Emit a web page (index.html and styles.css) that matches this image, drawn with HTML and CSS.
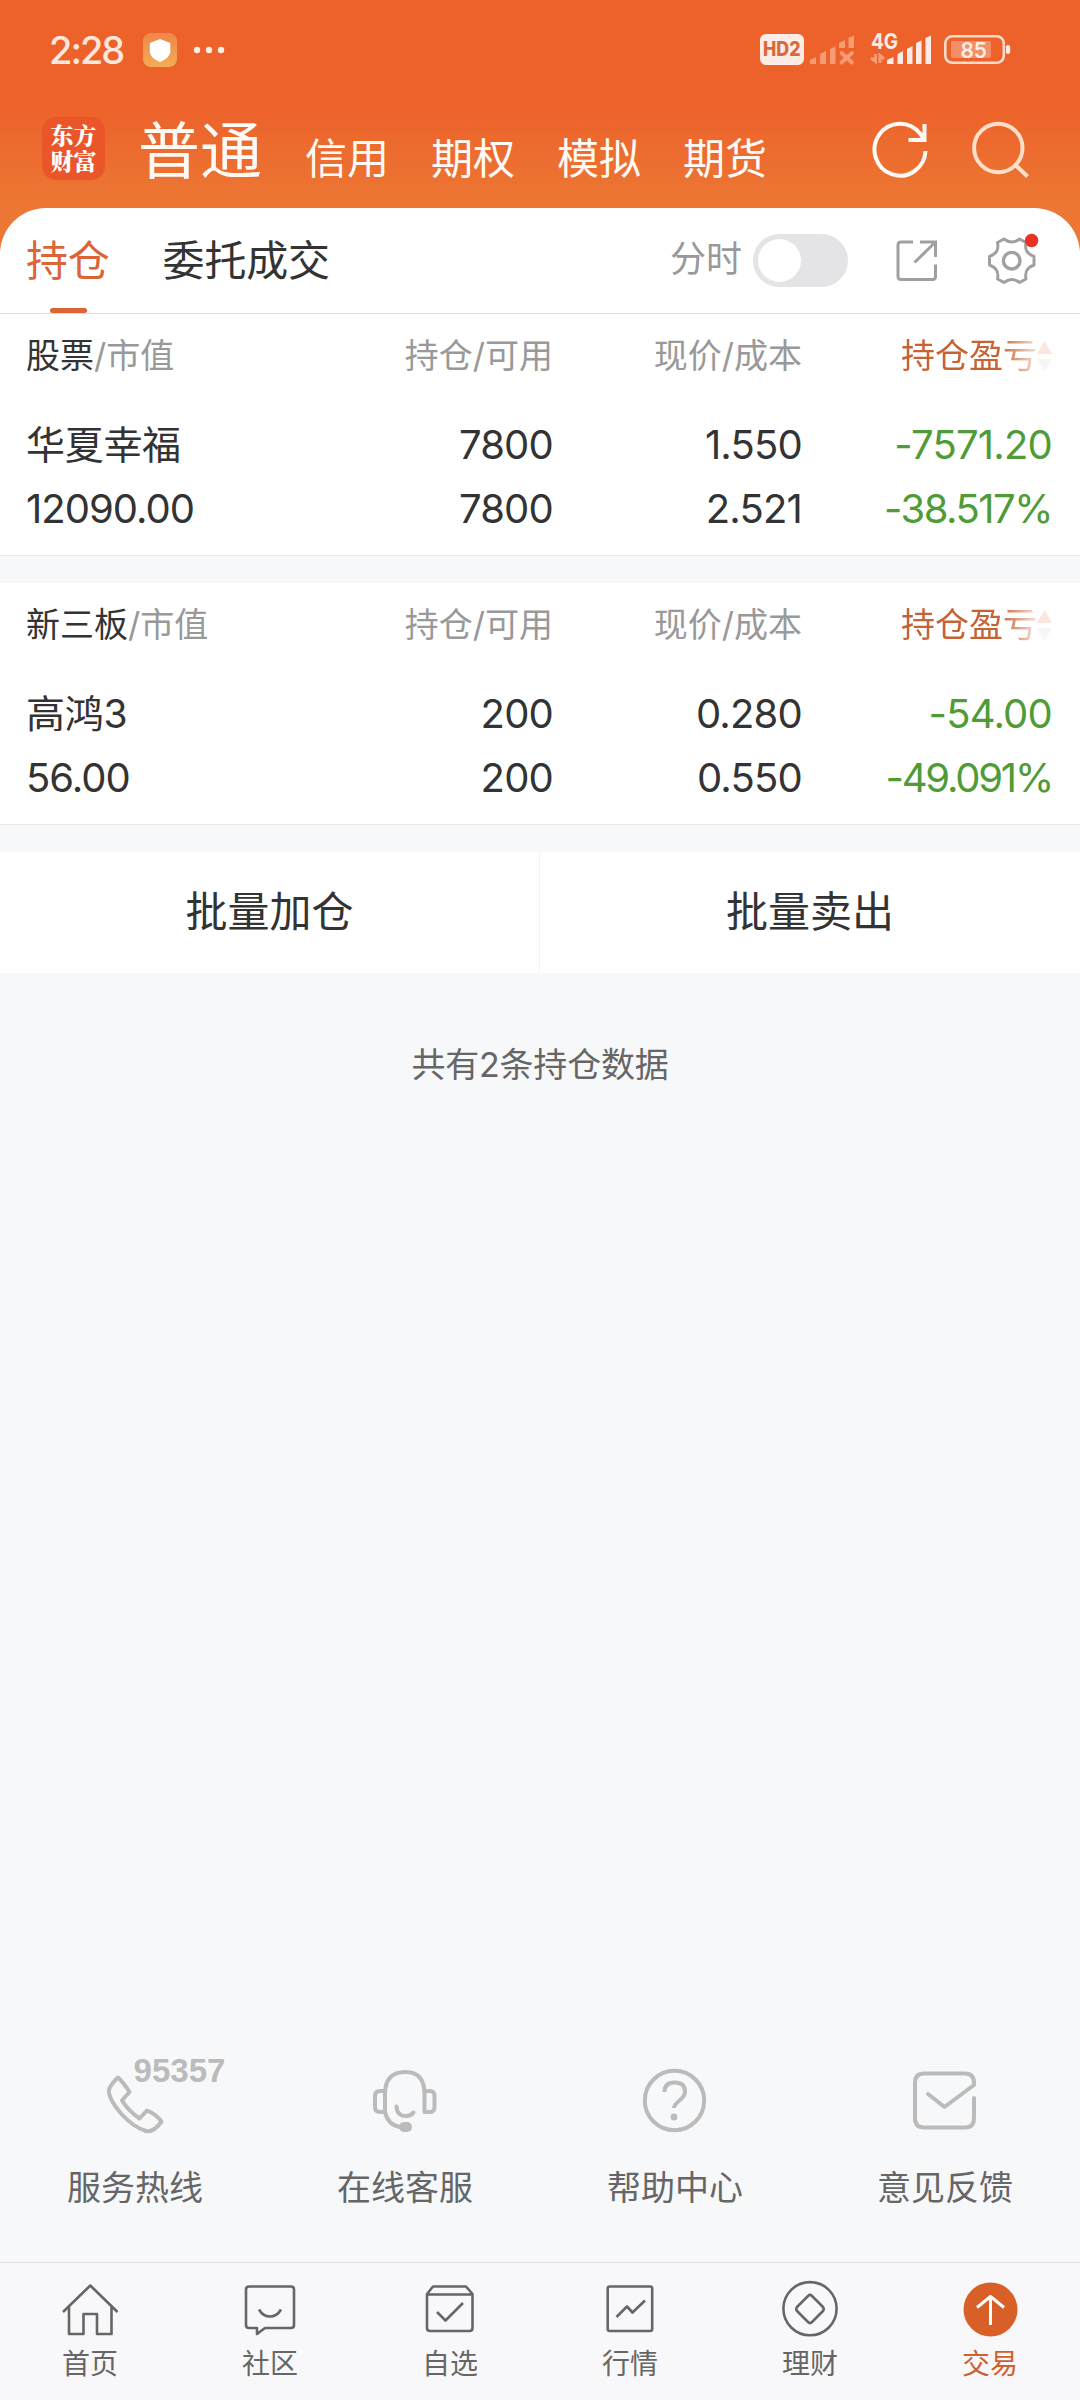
FILE: index.html
```html
<!DOCTYPE html>
<html lang="zh-CN">
<head>
<meta charset="utf-8">
<title>交易</title>
<link rel="stylesheet" href="styles.css">
</head>
<body>
<div class="app">
  <header class="top">
    <div class="status">
      <span class="time">2:28</span>
      <svg class="shield" width="34" height="34" viewBox="0 0 34 34"><defs><linearGradient id="sg" x1="0" y1="0" x2="0" y2="1"><stop offset="0" stop-color="#f08548"/><stop offset="1" stop-color="#f3ac55"/></linearGradient></defs><rect width="34" height="34" rx="8" fill="url(#sg)"/><path d="M17 6L27.300 10V19.500Q26 25.500 17 29Q8 25.500 6.800 19.500V10Z" fill="#fff"/></svg>
      <svg class="dots" width="32" height="8" viewBox="193 46 32 8" fill="#fdeee6"><circle cx="197" cy="50" r="3.200"/><circle cx="209" cy="50" r="3.200"/><circle cx="221" cy="50" r="3.200"/></svg>
      <svg class="signals" width="260" height="52" viewBox="755 24 260 52">
        <rect x="760" y="34" width="44" height="31" rx="6" fill="#fdece5"/>
        <text x="763" y="56" textLength="37.500" lengthAdjust="spacingAndGlyphs" class="hd">HD2</text>
        <g fill="#f69b74"><path d="M810 60L816 57V64H810ZM820 54L826 51V64H820ZM830 49L835.500 46.500V64H830ZM839 43L845 40V48H839ZM848.500 38L854 35.500V48H848.500Z"/></g>
        <path d="M841.500 53L852 62.500M852 53L841.500 62.500" stroke="#f69b74" stroke-width="3.800" stroke-linecap="round"/>
        <text x="871" y="49" textLength="27" lengthAdjust="spacingAndGlyphs" class="g4">4G</text>
        <path d="M875.500 54V61.500L871 58M880 63V55.500L884 59" fill="none" stroke="#f69b74" stroke-width="3"/>
        <path d="M887 60L893.500 57V64H887ZM897.500 54L903 51V64H897.500ZM907 49L912.500 46V64H907ZM916 43L921.500 40.500V64H916ZM925.500 38L931 35.500V64H925.500Z" fill="#fdece5"/>
        <rect x="945.300" y="36.300" width="58.500" height="26.500" rx="7" fill="none" stroke="#fdd9c9" stroke-width="2.600"/>
        <rect x="951" y="41" width="40" height="17" rx="2" fill="#f38f66"/>
        <rect x="1006" y="45" width="4.200" height="9" rx="2" fill="#fdece5"/>
        <text x="960.500" y="57.500" textLength="26.500" lengthAdjust="spacingAndGlyphs" class="bat">85</text>
      </svg>
    </div>
    <nav class="markets">
      <div class="logo">东方<br>财富</div>
      <span class="market current">普通</span>
      <span class="market">信用</span>
      <span class="market">期权</span>
      <span class="market">模拟</span>
      <span class="market">期货</span>
      <svg class="refresh" width="58" height="60" viewBox="871 120 58 60" fill="none" stroke="#fffaf5" stroke-width="4"><path d="M925.500 151A25.500 26 0 1 1 920 133.500L924 139.500M924.500 124V140H908.500"/></svg>
      <svg class="search" width="58" height="60" viewBox="972 119 58 60" fill="none" stroke="#ffdfca" stroke-width="4"><circle cx="998.300" cy="147" r="24.200"/><path d="M1015.500 164L1027.500 175.500"/></svg>
    </nav>
  </header>

  <main class="sheet">
    <div class="tabs">
      <span class="tab active">持仓</span>
      <span class="tab">委托成交</span>
      <span class="switch-label">分时</span>
      <span class="switch"></span>
      <svg class="share" width="44" height="44" viewBox="895 239 44 44" fill="none" stroke="#a0a0a0" stroke-width="3"><path d="M913 242H901Q898 242 898 245V276.500Q898 279.500 901 279.500H932.500Q935.500 279.500 935.500 276.500V264.500M920 242H935.500V257M935.500 242L914.500 262.500"/></svg>
      <svg class="gear" width="56" height="56" viewBox="984 233 56 56" fill="none" stroke="#a0a0a0" stroke-width="3"><path d="M1004 239Q1011.700 245 1019.500 239L1026 242.500C1024.500 250 1027 254 1034 256.500V265C1027 267.500 1024.500 271.500 1026 279L1019.500 282.500Q1011.700 276.500 1004 282.500L997.500 279C999 271.500 996.500 267.500 989.500 265V256.500C996.500 254 999 250 997.500 242.500Z" stroke-linejoin="round"/><circle cx="1011.700" cy="260.700" r="8.300" stroke-width="3.400"/><circle cx="1031.600" cy="240.500" r="6.700" fill="#e93223" stroke="none"/></svg>
    </div>

    <section class="card">
      <div class="row head">
        <span><b>股票</b>/市值</span><span>持仓/可用</span><span>现价/成本</span>
        <span class="sort"><em>持仓盈亏</em><svg width="15" height="33" viewBox="0 0 15 33"><path d="M7.500 1L15 14H0Z" fill="#f9e7de"/><path d="M0 19H15L7.500 32Z" fill="#f6f6f6"/></svg></span>
      </div>
      <div class="row first"><span class="name">华夏幸福</span><span>7800</span><span>1.550</span><span class="loss">-7571.20</span></div>
      <div class="row"><span>12090.00</span><span>7800</span><span>2.521</span><span class="loss pct">-38.517%</span></div>
    </section>

    <section class="card">
      <div class="row head">
        <span><b>新三板</b>/市值</span><span>持仓/可用</span><span>现价/成本</span>
        <span class="sort"><em>持仓盈亏</em><svg width="15" height="33" viewBox="0 0 15 33"><path d="M7.500 1L15 14H0Z" fill="#f9e7de"/><path d="M0 19H15L7.500 32Z" fill="#f6f6f6"/></svg></span>
      </div>
      <div class="row first"><span class="name">高鸿3</span><span>200</span><span>0.280</span><span class="loss">-54.00</span></div>
      <div class="row"><span>56.00</span><span>200</span><span>0.550</span><span class="loss pct wide">-49.091%</span></div>
    </section>

    <div class="actions"><span>批量加仓</span><span>批量卖出</span></div>
  </main>

  <p class="total">共有2条持仓数据</p>

  <section class="services">
    <div class="service">
      <svg width="190" height="84" viewBox="40 2054 190 84"><path d="M118 2077.500Q123 2082 129.500 2092L122 2100.500Q127.500 2110 139.500 2118.500L147 2110.500Q156 2114 161.500 2121.500Q154 2132.500 146 2131Q133 2127 121 2113.500Q108 2098 109 2090Q110 2085 118 2077.500Z"/><text x="133.500" y="2082" textLength="92" lengthAdjust="spacingAndGlyphs" class="hotline">95357</text></svg>
      <span>服务热线</span>
    </div>
    <div class="service">
      <svg width="130" height="84" viewBox="340 2054 130 84"><path d="M385 2112V2094Q385 2072 405.500 2072Q424.500 2072 424.500 2094V2112H430Q434.500 2112 434.500 2107V2096Q434.500 2091 430 2091H425M385 2091H380Q375 2091 375 2096V2107Q375 2112 380 2112H385Q388 2125 400 2127M396.500 2106.500Q397 2116 406 2116Q411 2116 413.500 2112.500"/><rect x="399" y="2122" width="13" height="10" rx="5" class="solid"/></svg>
      <span>在线客服</span>
    </div>
    <div class="service">
      <svg width="130" height="84" viewBox="610 2054 130 84"><circle cx="674.500" cy="2100.500" r="29.700"/><path d="M664.500 2092Q664.500 2082.500 674.500 2082.500Q685 2082.500 685 2091.500Q685 2096 679.500 2100.500Q674 2105 674 2108" stroke-linecap="butt"/><circle cx="674" cy="2117" r="3.400" class="solid"/></svg>
      <span>帮助中心</span>
    </div>
    <div class="service">
      <svg width="130" height="84" viewBox="880 2054 130 84"><path d="M928 2094L944.500 2107L974 2085V2083Q974 2073.500 965 2073.500H924Q915 2073.500 915 2083V2118Q915 2127.500 924 2127.500H965Q974 2127.500 974 2118V2098" stroke-linejoin="round" stroke-linecap="round"/></svg>
      <span>意见反馈</span>
    </div>
  </section>

  <footer class="nav">
    <div class="item"><svg width="60" height="60" viewBox="60 2279 60 60"><path d="M63 2312L90.300 2285.500L117.500 2312M69 2306.500V2334H83.500V2314H97V2334H111.500V2306.500"/></svg><span>首页</span></div>
    <div class="item"><svg width="60" height="60" viewBox="240 2279 60 60"><path d="M249 2286.500H291Q294 2286.500 294 2289.500V2325Q294 2328 291 2328H265L257 2334V2328H249Q246 2328 246 2325V2289.500Q246 2286.500 249 2286.500ZM259 2309.500Q263 2316.500 270 2316.500Q277 2316.500 281 2309.500"/></svg><span>社区</span></div>
    <div class="item"><svg width="60" height="60" viewBox="420 2279 60 60"><path d="M427 2294L433 2286.500H466L472.500 2294V2328Q472.500 2331 469.500 2331H430Q427 2331 427 2328ZM427 2294.500H472.500M437 2312L445.500 2320.500L463 2303"/></svg><span>自选</span></div>
    <div class="item"><svg width="60" height="60" viewBox="600 2279 60 60"><rect x="607.700" y="2286.500" width="44.500" height="44.500" rx="2"/><path d="M616.500 2317L627 2306.500L632.500 2312.500L645 2300.500"/></svg><span>行情</span></div>
    <div class="item"><svg width="60" height="60" viewBox="780 2279 60 60"><circle cx="810" cy="2308.700" r="26.600"/><path d="M808 2296Q810 2294 812 2296L823 2307Q824.500 2309 823 2311L812 2322Q810 2324 808 2322L797 2311Q795.500 2309 797 2307Z"/></svg><span>理财</span></div>
    <div class="item on"><svg width="60" height="60" viewBox="960 2279 60 60"><circle cx="990.500" cy="2309.500" r="27" class="disc"/><path d="M990.500 2325V2297M977 2307.500L990.500 2296.500L1004 2307.500" class="arrow"/></svg><span>交易</span></div>
  </footer>
</div>
</body>
</html>
```
FILE: styles.css
```css
* { box-sizing: border-box; }
body { margin: 0; background: #f7f8fa; color: #333; font-family: Inter, "Noto Sans CJK SC", sans-serif; }
svg { display: block; flex: none; }
.app { width: 1080px; height: 2400px; display: flex; flex-direction: column; }

.top { height: 264px; flex: none; background: linear-gradient(#ed622b 105px, #ec7633 200px); }
.status { height: 100px; padding-left: 49px; display: flex; align-items: center; }
.time { width: 94px; font-size: 38px; font-weight: 500; letter-spacing: -2px; line-height: 100px; color: #fde6db; }
.dots { margin-left: 16px; }
.signals { margin-left: auto; margin-right: 65px; }
.hd { font: 800 20px Inter, sans-serif; fill: #d9683a; }
.g4 { font: 700 22px Inter, sans-serif; fill: #fdece5; }
.bat { font: 600 22px Inter, sans-serif; fill: #fdece5; }

.markets { height: 100px; padding: 0 50px 0 42px; display: flex; align-items: center; }
.logo { width: 63px; height: 63px; margin: -3px 33px 0 0; padding-top: 5px; border-radius: 14px; background: #ea5529; color: #fff; text-align: center; font-family: "Noto Serif CJK SC", "Noto Sans CJK SC", sans-serif; font-size: 23px; font-weight: 900; line-height: 26px; }
.market { margin-right: 42px; padding-top: 18px; font-size: 42px; line-height: 60px; color: #fffaf5; white-space: nowrap; }
.market.current { padding-top: 3px; width: 125px; font-size: 62px; }
.refresh { margin-left: auto; margin-right: 43px; }

.sheet { margin-top: -56px; flex: none; }
.tabs { height: 106px; padding: 0 40px 0 26px; background: #fff; border-radius: 46px 46px 0 0; border-bottom: 1px solid #ddd; display: flex; align-items: center; }
.tab { position: relative; margin-right: 53px; font-size: 42px; letter-spacing: -0.2px; line-height: 104px; white-space: nowrap; }
.active { color: #dc6436; }
.active::after { content: ""; position: absolute; left: 24px; bottom: 0; width: 37px; height: 5px; border-radius: 3px; background: #dc6436; }
.switch-label { margin-left: auto; padding-bottom: 3px; font-size: 36px; line-height: 60px; color: #999; }
.switch { width: 95px; height: 53px; margin: 0 47px 0 11px; padding: 5px; border-radius: 27px; background: #e4e4e7; }
.switch::before { content: ""; display: block; width: 43px; height: 43px; border-radius: 50%; background: #fff; }
.share { margin-right: 45px; }

.card { height: 242px; background: #fff; border-bottom: 1px solid #e9e9ea; margin-bottom: 27px; }
.row { height: 64px; padding: 0 28px 0 26px; display: grid; grid-template-columns: 278px 249px 249px 250px; align-items: center; font-size: 40px; letter-spacing: -0.8px; line-height: 66px; }
.row > span { text-align: right; white-space: nowrap; }
.row > span:first-child { text-align: left; letter-spacing: -1px; }
.row.first { margin-top: 15px; }
.row > .name:first-child { font-size: 39px; letter-spacing: -0.3px; }
.head { height: 83px; font-size: 34px; letter-spacing: 0; line-height: 84px; color: #999; }
.head > span:first-child { letter-spacing: 0; }
.head b { font-weight: 400; color: #333; }
.row > .sort { display: flex; align-items: center; justify-content: flex-end; }
.sort em { font-style: normal; color: #c86233; -webkit-mask-image: linear-gradient(to right, #000 72%, rgba(0,0,0,.2)); mask-image: linear-gradient(to right, #000 72%, rgba(0,0,0,.2)); }
.loss { color: #4f9b37; }
.pct { letter-spacing: -1.5px; }
.pct.wide { letter-spacing: -2.2px; }

.actions { height: 121px; background: #fff; display: grid; grid-template-columns: 1fr 1fr; font-size: 42px; line-height: 120px; text-align: center; }
.actions span:first-child { border-right: 1px solid #f2f3f5; }

.total { margin: 62px 0 0; font-size: 34px; letter-spacing: -0.2px; line-height: 60px; text-align: center; color: #666; }

.services { margin-top: auto; height: 208px; flex: none; display: grid; grid-template-columns: repeat(4, 270px); }
.service { display: flex; flex-direction: column; align-items: center; font-size: 34px; color: #666; }
.service svg { fill: none; stroke: #bbb; stroke-width: 4; stroke-linejoin: round; stroke-linecap: round; }
.service .solid { fill: #bbb; stroke: none; }
.service span { margin-top: 20px; line-height: 60px; }
.hotline { font: 700 34px "Liberation Sans", sans-serif; fill: #bbb; stroke: none; }

.nav { height: 138px; flex: none; border-top: 1px solid #e0e0e2; background: #f8f8fa; display: grid; grid-template-columns: repeat(6, 180px); }
.item { padding-top: 16px; display: flex; flex-direction: column; align-items: center; font-size: 28px; color: #666; }
.item svg { fill: none; stroke: #666; stroke-width: 2.6; stroke-linejoin: round; }
.item span { line-height: 50px; }
.item.on { color: #cf602f; }
.item .disc { fill: #d85f28; stroke: none; }
.item .arrow { stroke: #fff; stroke-width: 3; }
```
